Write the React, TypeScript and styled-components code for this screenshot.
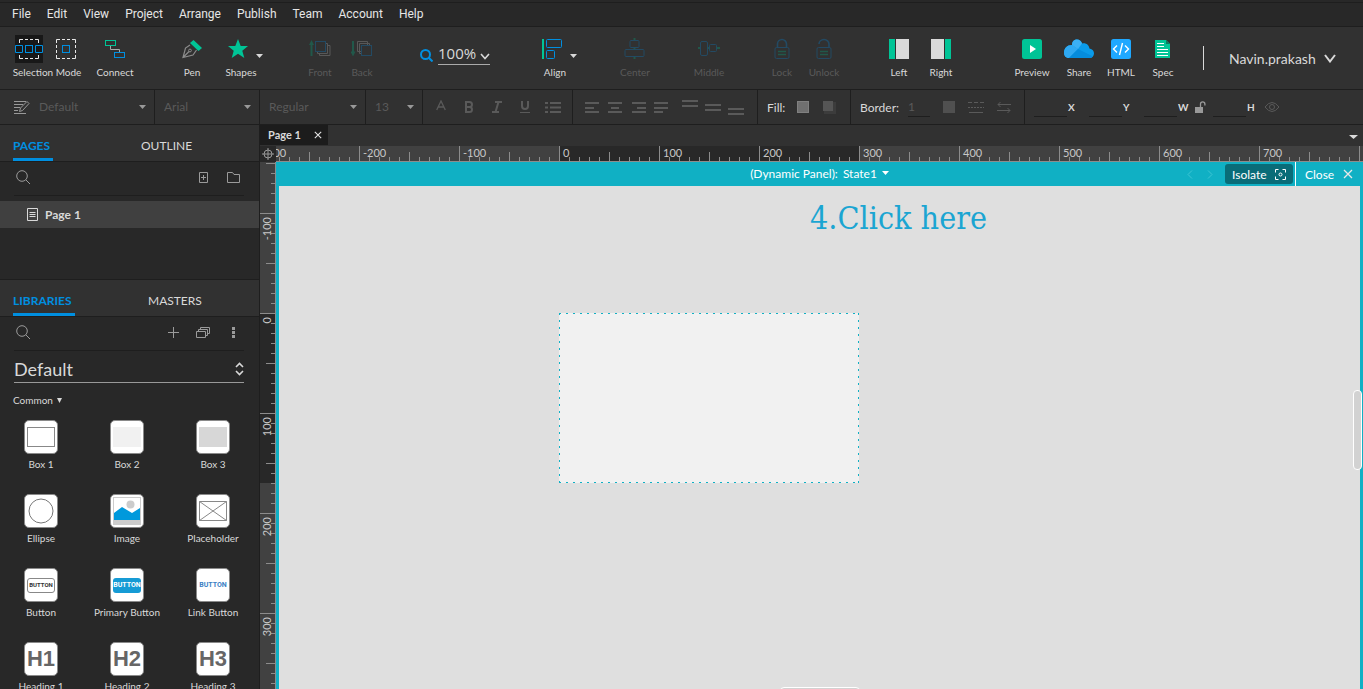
import React, { useEffect, useRef, useState } from "react";
import styled, { createGlobalStyle, css } from "styled-components";

const c = {
  bar: "#313131",
  dark: "#282828",
  line: "#1e1e1e",
  text: "#d9d9d9",
  dim: "#5a5a5a",
  icon: "#9b9b9b",
  blue: "#008fe0",
  green: "#00c496",
  dimBlue: "#234a63",
  dimGreen: "#21584a",
  teal: "#10b0c4",
  ruler: "#414141",
};

const GlobalStyle = createGlobalStyle`
  *, *::before, *::after { box-sizing: border-box; }
  body {
    margin: 0;
    background: ${c.dark};
    color: ${c.text};
    font-family: Lato, "Open Sans", sans-serif;
    font-size: 10px;
    overflow: hidden;
  }
  button, input, select { font: inherit; color: inherit; background: none; border: 0; padding: 0; margin: 0; }
  button { cursor: pointer; }
  svg { display: block; flex: none; }
`;

const Shell = styled.div`
  display: flex;
  flex-direction: column;
  height: 100vh;
`;

/* ---------- menu ---------- */
const MenuBar = styled.nav`
  display: flex;
  flex: none;
  align-items: center;
  gap: 16px;
  height: 27px;
  padding: 0 12px;
  border-bottom: 1px solid ${c.line};
  box-shadow: inset 0 2px 0 ${c.dark}, inset 0 3px 0 ${c.line};
  font-family: Roboto, sans-serif;
  font-size: 12px;
  color: #e6e6e6;
`;
const MenuButton = styled.button`
  line-height: 20px;
  padding-top: 2px;
`;

/* ---------- toolbar ---------- */
const Toolbar = styled.header`
  display: flex;
  flex: none;
  align-items: flex-start;
  height: 63px;
  padding: 8px 27px 0 12px;
  background: ${c.bar};
  border-bottom: 1px solid ${c.line};
`;
const Space = styled.div<{ $n: number }>`
  flex: ${(p) => p.$n} 1 0;
`;
const toolLayout = css<{ $w?: number }>`
  display: flex;
  flex: none;
  flex-direction: column;
  align-items: center;
  gap: 1px;
  width: ${(p) => p.$w ?? 42}px;
  line-height: 16px;
  white-space: nowrap;
`;
const ToolGroup = styled.div`
  ${toolLayout}
`;
const ToolButton = styled.button`
  ${toolLayout}
  &:disabled { color: ${c.dim}; cursor: default; }
`;
const IconSlot = styled.span<{ $caret?: boolean }>`
  display: flex;
  align-items: center;
  justify-content: center;
  gap: ${(p) => (p.$caret ? 8 : 0)}px;
  height: 28px;
  padding-left: ${(p) => (p.$caret ? 9 : 0)}px;
  & > svg + svg { margin-top: 13px; }
`;
const ModeRow = styled.div`
  display: flex;
  gap: 13px;
  height: 28px;
  padding-right: 4px;
`;
const ModeButton = styled.button<{ $on?: boolean }>`
  display: flex;
  align-items: center;
  background: ${(p) => (p.$on ? "#181818" : "none")};
`;
const Zoom = styled.div`
  display: flex;
  flex: none;
  align-items: center;
  gap: 5px;
  height: 28px;
  padding-top: 10px;
  margin-top: 1px;
`;
const ZoomValue = styled.button`
  display: flex;
  align-items: center;
  justify-content: space-between;
  width: 52px;
  height: 24px;
  margin-top: -4px;
  border-bottom: 1px solid #aaa;
  font-family: "Open Sans", sans-serif;
  font-size: 15px;
  line-height: 20px;
  & > svg { margin-top: 8px; }
`;
const Divider = styled.div`
  flex: none;
  width: 1px;
  height: 24px;
  margin-top: 11px;
  background: ${c.text};
`;
const Account = styled.button`
  display: flex;
  flex: none;
  align-items: center;
  justify-content: space-between;
  height: 24px;
  width: 107px;
  margin-top: 11px;
  font-size: 14px;
`;

/* ---------- format bar ---------- */
const FormatBar = styled.div`
  display: flex;
  flex: none;
  height: 35px;
  background: ${c.bar};
  border-bottom: 1px solid ${c.line};
`;
const Cell = styled.div<{ $w?: number; $pad?: number; $gap?: number }>`
  display: flex;
  flex: ${(p) => (p.$w ? "none" : "1")};
  align-items: center;
  gap: ${(p) => p.$gap ?? 0}px;
  width: ${(p) => (p.$w ? `${p.$w}px` : "auto")};
  padding: 0 8px 0 ${(p) => p.$pad ?? 9}px;
  border-right: ${(p) => (p.$w ? 1 : 0)}px solid ${c.line};
`;
const FormatSelect = styled.select`
  flex: 1;
  min-width: 0;
  height: 24px;
  margin-top: -2px;
  appearance: none;
  color: ${c.dim};
  font-size: 12px;
`;
const FormatButton = styled.button<{ $w: number; $lead?: boolean }>`
  display: flex;
  flex: none;
  align-items: center;
  justify-content: center;
  width: ${(p) => p.$w}px;
  height: 24px;
  margin-left: ${(p) => (p.$lead ? 5 : 0)}px;
`;
const FormatLabel = styled.label`
  font-size: 12px;
`;
const Field = styled.input`
  flex: none;
  height: 20px;
  border-bottom: 1px solid ${c.line};
  color: ${c.dim};
  font-size: 12px;
`;
const BorderField = styled(Field)`
  width: 22px;
`;
const CoordField = styled(Field)`
  width: 33px;
`;
const BorderGroup = styled.div`
  display: flex;
  flex: none;
  align-items: center;
  justify-content: space-between;
  width: 70px;
`;
const Coord = styled.label<{ $w: number }>`
  display: flex;
  flex: none;
  align-items: center;
  gap: 1px;
  width: ${(p) => p.$w}px;
  font-weight: 700;
`;
const RatioLock = styled.button`
  width: 18px;
`;

/* ---------- side bar ---------- */
const Main = styled.div`
  display: flex;
  flex: 1;
  min-height: 0;
`;
const Sidebar = styled.aside`
  display: flex;
  flex: none;
  flex-direction: column;
  width: 260px;
  overflow: hidden;
  border-right: 1px solid ${c.line};
`;
const PagesPane = styled.section`
  flex: none;
  height: 155px;
  border-bottom: 1px solid ${c.line};
`;
const LibraryPane = styled.section`
  flex: 1;
  min-height: 0;
  overflow: hidden;
`;
const Tabs = styled.div<{ $gap: number }>`
  display: flex;
  gap: ${(p) => p.$gap}px;
  height: 37px;
  padding-left: 13px;
  background: ${c.bar};
  border-bottom: 1px solid ${c.line};
`;
const Tab = styled.button<{ $on?: boolean; $w: number }>`
  width: ${(p) => p.$w}px;
  padding-top: 7px;
  text-align: left;
  white-space: nowrap;
  font-size: 12px;
  font-weight: ${(p) => (p.$on ? 700 : 400)};
  color: ${(p) => (p.$on ? c.blue : c.text)};
  border-bottom: 3px solid ${(p) => (p.$on ? c.blue : "transparent")};
`;
const SearchRow = styled.div`
  display: flex;
  align-items: center;
  height: 34px;
  margin: 0 15px 0 14px;
  padding: 0 4px 3px 2px;
  border-bottom: 1px solid ${c.line};
`;
const SearchInput = styled.input`
  flex: 1;
  min-width: 0;
`;
const RowIcon = styled.button`
  display: flex;
  align-items: center;
  justify-content: center;
  width: 30px;
  height: 24px;
  &:last-child { width: 14px; margin-left: 8px; }
`;
const PageRow = styled.button`
  display: flex;
  align-items: center;
  gap: 7px;
  width: 100%;
  height: 27px;
  margin-top: 5px;
  padding-left: 27px;
  background: #404040;
  font-size: 12px;
  font-weight: 700;
`;
const LibrarySelectRow = styled.div`
  display: flex;
  align-items: center;
  height: 32px;
  margin: 0 15px 0 14px;
  padding-top: 4px;
  border-bottom: 1px solid #999;
`;
const LibrarySelect = styled.select`
  flex: 1;
  appearance: none;
  font-size: 18px;
  line-height: 26px;
`;
const GroupToggle = styled.button`
  display: flex;
  align-items: center;
  gap: 4px;
  height: 16px;
  margin: 9px 0 12px 13px;
`;
const WidgetGrid = styled.div`
  display: grid;
  grid-template-columns: repeat(3, 82px);
  column-gap: 4px;
`;
const Widget = styled.button`
  display: flex;
  flex-direction: column;
  align-items: center;
  gap: 2px;
  height: 74px;
  white-space: nowrap;
  line-height: 16px;
`;
const Tile = styled.span`
  display: flex;
  align-items: center;
  justify-content: center;
  width: 34px;
  height: 34px;
  background: #fff;
  border: 1px solid #8a8a8a;
  border-radius: 5px;
`;
const TileHeading = styled.span`
  font: 700 22px/30px "Liberation Sans", sans-serif;
  color: #666;
`;
const TileButton = styled.span<{ $kind: "plain" | "primary" | "link" }>`
  display: flex;
  align-items: center;
  justify-content: center;
  width: 28px;
  height: 15px;
  border-radius: 3px;
  font: 700 7px/12px Roboto, sans-serif;
  ${(p) => p.$kind === "plain" && css`border: 1px solid #888; color: #333; font-size: 6px;`}
  ${(p) => p.$kind === "primary" && css`background: #169bd5; color: #fff;`}
  ${(p) => p.$kind === "link" && css`color: #3b7fc4;`}
`;

/* ---------- editor ---------- */
const Editor = styled.main`
  display: flex;
  flex: 1;
  flex-direction: column;
  min-width: 0;
  background: ${c.bar};
`;
const DocTabs = styled.div`
  display: flex;
  flex: none;
  align-items: flex-start;
  justify-content: space-between;
  height: 21px;
  padding-right: 5px;
`;
const DocTab = styled.div`
  display: flex;
  align-items: center;
  justify-content: space-between;
  width: 68px;
  height: 20px;
  padding: 0 6px 0 8px;
  background: #1c1c1c;
  font-size: 11px;
  font-weight: 700;
  line-height: 18px;
`;
const DocMenu = styled.button`
  padding-top: 10px;
`;
const Workspace = styled.div`
  display: grid;
  flex: 1;
  grid-template: 16px minmax(0, 1fr) / 16px minmax(0, 1fr);
  min-height: 0;
`;
const Corner = styled.div`
  display: flex;
  align-items: center;
  justify-content: center;
  background: ${c.dark};
`;
const RulerBox = styled.div`
  min-width: 0;
  min-height: 0;
  overflow: hidden;
  & text { font-size: 11px; fill: #c8c8c8; }
`;
const Stage = styled.div`
  display: flex;
  flex-direction: column;
  min-height: 0;
  overflow: hidden;
  background: ${c.teal};
`;
const StageHeader = styled.div`
  display: grid;
  flex: none;
  grid-template-columns: 1fr auto 1fr;
  align-items: center;
  height: 24px;
  color: #fff;
  font-size: 12px;
`;
const StateButton = styled.button`
  display: flex;
  grid-column: 2;
  align-items: center;
  gap: 5px;
  padding-bottom: 2px;
`;
const StageActions = styled.div`
  display: flex;
  align-items: center;
  justify-content: flex-end;
  height: 24px;
`;
const Step = styled.button`
  display: flex;
  justify-content: center;
  width: 20px;
`;
const Isolate = styled.button`
  display: flex;
  align-items: center;
  justify-content: space-between;
  width: 68px;
  height: 20px;
  margin: 0 2px 0 5px;
  padding: 0 7px;
  background: #096c78;
  border-radius: 3px;
`;
const CloseButton = styled.button`
  display: flex;
  align-items: center;
  justify-content: space-between;
  width: 68px;
  height: 24px;
  padding: 0 10px 0 9px;
  border-left: 1px solid #fff;
`;
const Canvas = styled.div`
  position: relative;
  flex: 1;
  min-height: 0;
  margin: 0 3px;
  background: #dfdfdf;
`;
const Annotation = styled.p`
  position: absolute;
  left: 531px;
  top: 10px;
  margin: 0;
  font: 32px/44px "DejaVu Serif Condensed", "Liberation Serif", serif;
  white-space: nowrap;
  color: #1ba5d2;
`;
const PanelShape = styled.div`
  position: absolute;
  left: 280px;
  top: 127px;
  background: #f1f1f1;
`;
const scrollHandle = css`
  position: absolute;
  background: #d2d2d2;
  border: 1px solid #fff;
  border-radius: 4px;
`;
const VScroll = styled.div`
  ${scrollHandle}
  top: 204px;
  right: -2px;
  width: 9px;
  height: 80px;
`;
const HScroll = styled.div`
  ${scrollHandle}
  left: 501px;
  bottom: -7px;
  width: 80px;
  height: 9px;
`;

/* ---------- icons ---------- */
const Caret = ({ w = 7, color = c.text }: { w?: number; color?: string }) => (
  <svg width={w} height={4} viewBox="0 0 8 4" preserveAspectRatio="none">
    <path d="M0 0h8L4 4z" fill={color} />
  </svg>
);
const Chevron = ({ w, h, s }: { w: number; h: number; s: number }) => (
  <svg width={w} height={h} viewBox={`0 0 ${w} ${h}`}>
    <path d={`M1 1L${w / 2} ${h - 1.5}L${w - 1} 1`} fill="none" stroke={c.text} strokeWidth={s} />
  </svg>
);
const SelectIcon = ({ wide }: { wide?: boolean }) => (
  <svg width={wide ? 28 : 20} height={28} viewBox={wide ? "0 0 28 28" : "4 0 20 28"} fill="none">
    <g stroke="#e8e8e8">
      <path d="M4.5 8V4.500H8M20 4.500h3.500V8M23.500 20v3.500H20M8 23.500H4.500V20M10 4.500h3M15 4.500h3M10 23.500h3M15 23.500h3" />
      {!wide && <path d="M4.500 10v3M4.500 15v3M23.500 10v3M23.500 15v3" />}
    </g>
    <g stroke={c.blue}>
      <rect x="10.500" y="10.500" width="7" height="7" />
      {wide && <path d="M.5 10.500h7v7h-7zM20.500 10.500h7v7h-7z" />}
    </g>
  </svg>
);
const ConnectIcon = () => (
  <svg width="22" height="20" viewBox="0 0 22 20" fill="none">
    <path d="M6.500 7v3.500h9V13" stroke="#aaa" />
    <rect x="1.500" y="1.500" width="10" height="5" stroke={c.green} />
    <rect x="10.500" y="13.500" width="10" height="5" stroke={c.blue} />
  </svg>
);
const PenIcon = () => (
  <svg width="20" height="20" viewBox="0 0 20 20">
    <path d="M11.500 1L20 9l-3.500 3L8 4z" fill={c.green} />
    <path d="M8 6L3.500 9 1 18.500 11 16l3.500-5M1 18.500L7 12.500" fill="none" stroke="#8c8c8c" strokeWidth="1.200" />
    <circle cx="8" cy="11.500" r="1.400" fill="none" stroke="#8c8c8c" />
  </svg>
);
const StarIcon = () => (
  <svg width="20" height="20" viewBox="0 0 20 20">
    <path d="M10 0l2.700 7H20l-5.700 4.800L16.300 19 10 14.800 3.700 19l2-7.200L0 7h7.300z" fill={c.green} />
  </svg>
);
const OrderIcon = ({ back }: { back?: boolean }) => (
  <svg width="22" height="20" viewBox="0 0 22 20" fill="none">
    {back ? (
      <>
        <path d="M2 2v12" stroke={c.dimGreen} strokeWidth="2" />
        <path d="M-.5 12.500h5L2 17.500z" fill={c.dimGreen} />
        <path d="M10 12.500H6.500v-10h10V6M10 14.500H8.500v-10h10V6" stroke="#585858" />
        <rect x="10.500" y="6.500" width="10" height="10" stroke={c.dimBlue} />
      </>
    ) : (
      <>
        <path d="M2.500 5v12" stroke={c.dimGreen} strokeWidth="2" />
        <path d="M0 6h5L2.500 1z" fill={c.dimGreen} />
        <path d="M17 4.500h1.500v10H8.500V12M19 6.500h2v10H10.500V15" stroke="#585858" />
        <rect x="6.500" y="2.500" width="10" height="10" stroke={c.dimBlue} />
      </>
    )}
  </svg>
);
const ZoomIcon = () => (
  <svg width="13" height="13" viewBox="0 0 13 13" fill="none" stroke={c.blue} strokeWidth="2">
    <circle cx="5.500" cy="5.500" r="4.500" />
    <path d="M8.500 8.500l4 4" />
  </svg>
);
const AlignIcon = () => (
  <svg width="20" height="22" viewBox="0 0 20 22" fill="none">
    <path d="M1 1v20" stroke={c.green} strokeWidth="2" />
    <rect x="4.500" y="1.500" width="15" height="8" rx="1" stroke={c.blue} />
    <rect x="4.500" y="12.500" width="8" height="8" rx="1" stroke={c.blue} />
  </svg>
);
const CenterIcon = () => (
  <svg width="22" height="22" viewBox="0 0 22 22" fill="none">
    <path d="M10.500 0v3M10.500 9v3M10.500 19v2" stroke={c.dimGreen} strokeWidth="2" />
    <rect x="6" y="2.500" width="9" height="7" rx="1" stroke={c.dimBlue} />
    <rect x="1" y="11.500" width="19" height="7" rx="1" stroke={c.dimBlue} />
  </svg>
);
const MiddleIcon = () => (
  <svg width="22" height="20" viewBox="0 0 22 20" fill="none">
    <path d="M0 9h3M9 9h3M19 9h3" stroke={c.dimGreen} strokeWidth="2" />
    <rect x="2.500" y="2.500" width="7" height="14" rx="1.500" stroke={c.dimBlue} />
    <rect x="11.500" y="5.500" width="7" height="7" rx="1" stroke={c.dimBlue} />
  </svg>
);
const LockIcon = ({ open }: { open?: boolean }) => (
  <svg width="16" height="22" viewBox="0 0 16 22" fill="none">
    <path d={open ? "M3 6a5 4.500 0 0 1 10 0v4" : "M3.500 10V6a4.500 4.500 0 0 1 9 0v4"} stroke={c.dimBlue} strokeWidth="1.600" />
    <rect x="1" y="9.500" width="14" height="11" rx="1.500" stroke={c.dimBlue} />
    <path d="M4 13.500h8M4 16.500h8" stroke={c.dimGreen} strokeWidth="1.500" />
  </svg>
);
const DockIcon = ({ right }: { right?: boolean }) => (
  <svg width="20" height="20" viewBox="0 0 20 20">
    <path d={right ? "M14 0h6v20h-6z" : "M0 0h6v20H0z"} fill={c.green} />
    <path d={right ? "M0 0h13v20H0z" : "M7 0h13v20H7z"} fill="#d9d9d9" />
  </svg>
);
const PreviewIcon = () => (
  <svg width="20" height="20" viewBox="0 0 20 20">
    <rect width="20" height="20" rx="2.500" fill={c.green} />
    <path d="M8 6l6 4-6 4z" fill="#fff" />
  </svg>
);
const CloudIcon = () => (
  <svg width="30" height="20" viewBox="0 0 30 20">
    <path d="M5 19C1.500 19 0 16.500 0 13.500 0 9.500 3 6 8 6 8 2 10.500.5 13 .5s4.500 2 5 4C22 3.500 25 6 25.500 9.500 28.500 10 30 12 30 14.500S28 19 25.500 19z" fill="#0a9bea" />
    <path d="M5 19C1.500 19 0 16.500 0 13.500 0 9.500 3 6 8 6l6 4-9 9z" fill="#2fa9f2" />
    <path d="M8 6C8 2 10.500.5 13 .5s4.500 2 5 4L14 10z" fill="#3bb0f5" />
    <path d="M5 19l9-9 15 7.500q-1.500 1.500-3.500 1.500z" fill="#058cdd" />
  </svg>
);
const HtmlIcon = () => (
  <svg width="20" height="20" viewBox="0 0 20 20">
    <rect width="20" height="20" rx="2.500" fill="#1fa8ff" />
    <path d="M6 6.500L2.500 10 6 13.500M14 6.500l3.500 3.500-3.500 3.500M11.500 4l-3 12" fill="none" stroke="#fff" strokeWidth="1.400" />
  </svg>
);
const SpecIcon = () => (
  <svg width="16" height="18" viewBox="0 0 16 18">
    <path d="M0 0h11l4 4v14H0z" fill={c.green} />
    <path d="M11 0l4 4h-4z" fill="#0a7a5f" />
    <path d="M2 3.500h7M2 6.500h7M2 9.500h11M2 12.500h11M2 15.500h11" stroke="#fff" />
  </svg>
);
const StyleIcon = () => (
  <svg width="16" height="14" viewBox="0 0 16 14" fill="none" stroke="#999">
    <path d="M0 1.500h12M0 4.500h9M0 7.500h6M0 10.500h4M0 13.500h12" />
    <path d="M5.500 11.500l1-3.500L13 1.500l2 2L8.500 10.500z" />
  </svg>
);
const ListIcon = () => (
  <svg width="16" height="12" viewBox="0 0 16 12" stroke={c.dim} strokeWidth="2">
    <path d="M0 2h3M5 2h11M0 6.500h3M5 6.500h11M0 11h3M5 11h11" />
  </svg>
);
const SearchIcon = () => (
  <svg width="15" height="15" viewBox="0 0 15 15" fill="none" stroke={c.icon}>
    <circle cx="6" cy="6" r="5.300" />
    <path d="M9.800 9.800L14 14" />
  </svg>
);
const SmallX = ({ s, w = 1.3 }: { s: number; w?: number }) => (
  <svg width={s} height={s} viewBox="0 0 10 10"><path d="M1 1l8 8M9 1L1 9" stroke="#e8e8e8" strokeWidth={w} /></svg>
);

/* ---------- rulers ---------- */
function Ruler({ vertical, origin, length }: { vertical?: boolean; origin: number; length: number }) {
  const box = useRef<HTMLDivElement>(null);
  const [size, setSize] = useState(0);

  useEffect(() => {
    const el = box.current;
    if (!el) return;
    const measure = () => setSize(vertical ? el.clientHeight : el.clientWidth);
    measure();
    const observer = new ResizeObserver(measure);
    observer.observe(el);
    return () => observer.disconnect();
  }, [vertical]);

  const ticks: number[] = [];
  for (let v = -300; origin + v < size; v += 10) ticks.push(v);
  const firstLabel = vertical ? 0 : -20;
  const labels = ticks.filter((v) => v % 100 === 0 && origin + v >= firstLabel && origin + v < size - 12);
  const tickPath = ticks
    .map((v) => {
      const p = origin + v + 0.5;
      const len = v % 100 === 0 ? 15 : v % 50 === 0 ? 9 : 4;
      return vertical ? `M${15 - len} ${p}h${len}` : `M${p} ${15 - len}v${len}`;
    })
    .join("");

  return (
    <RulerBox ref={box}>
      <svg width={vertical ? 16 : "100%"} height={vertical ? "100%" : 16}>
        <rect width="100%" height="100%" fill={c.ruler} />
        {vertical ? (
          <rect y={origin} width="16" height={length} fill={c.dark} />
        ) : (
          <rect x={origin} width={length} height="16" fill={c.dark} />
        )}
        <path d={tickPath} stroke="#8c8c8c" />
        <rect x={vertical ? 15 : 0} y={vertical ? 0 : 15} width={vertical ? 1 : "100%"} height={vertical ? "100%" : 1} fill="#8c8c8c" />
        {labels.map((v) =>
          vertical ? (
            <text key={v} textAnchor="end" transform={`translate(11 ${origin + v + 4}) rotate(-90)`}>{v}</text>
          ) : (
            <text key={v} x={origin + v + 4} y={11}>{v}</text>
          )
        )}
      </svg>
    </RulerBox>
  );
}

/* ---------- data ---------- */
const menus = ["File", "Edit", "View", "Project", "Arrange", "Publish", "Team", "Account", "Help"];

const widgets: [string, React.ReactNode][] = [
  ["Box 1", <svg width="28" height="20"><rect x=".5" y=".5" width="27" height="19" fill="#fff" stroke="#888" /></svg>],
  ["Box 2", <svg width="28" height="20"><rect width="28" height="20" fill="#f1f1f1" /></svg>],
  ["Box 3", <svg width="28" height="20"><rect width="28" height="20" fill="#d7d7d7" /></svg>],
  ["Ellipse", <svg width="26" height="26"><circle cx="13" cy="13" r="12" fill="#fff" stroke="#777" /></svg>],
  ["Image", (
    <svg width="28" height="28" viewBox="0 0 28 28">
      <rect x=".5" y=".5" width="27" height="27" fill="#fff" stroke="#ccc" />
      <circle cx="17.500" cy="7.500" r="4" fill="#ccc" />
      <path d="M1 16l8-6 10 6 8-5v12H1z" fill="#0099dc" />
      <path d="M0 23h28v5H0z" fill="#ccc" />
    </svg>
  )],
  ["Placeholder", <svg width="28" height="20"><path d="M.5.5h27v19H.5zM.5.500l27 19M27.500.500l-27 19" fill="#fff" stroke="#888" /></svg>],
  ["Button", <TileButton $kind="plain">BUTTON</TileButton>],
  ["Primary Button", <TileButton $kind="primary">BUTTON</TileButton>],
  ["Link Button", <TileButton $kind="link">BUTTON</TileButton>],
  ["Heading 1", <TileHeading>H1</TileHeading>],
  ["Heading 2", <TileHeading>H2</TileHeading>],
  ["Heading 3", <TileHeading>H3</TileHeading>],
];

const aligns: [string, string][] = [
  ["Align left", "M0 2h14M0 7h9M0 11h14"],
  ["Align center", "M0 2h14M3 7h8M0 11h14"],
  ["Align right", "M1 2h14M6 7h9M1 11h14"],
  ["Justify", "M0 2h14M0 7h14M0 11h9"],
  ["Align top", "M0 0h16M0 5h16"],
  ["Align middle", "M0 4h16M0 9h16"],
  ["Align bottom", "M0 8h16M0 13h16"],
];

const selects = [
  { label: "Style", value: "Default", w: 155 },
  { label: "Font", value: "Arial", w: 105 },
  { label: "Weight", value: "Regular", w: 106 },
  { label: "Size", value: "13", w: 57 },
];

const Tool = ({ label, icon, w, disabled, caret }: { label: string; icon: React.ReactNode; w?: number; disabled?: boolean; caret?: boolean }) => (
  <ToolButton $w={w} disabled={disabled}>
    <IconSlot $caret={caret}>
      {icon}
      {caret && <Caret />}
    </IconSlot>
    {label}
  </ToolButton>
);

export default function App() {
  return (
    <Shell>
      <GlobalStyle />
      <MenuBar>
        {menus.map((m) => <MenuButton key={m}>{m}</MenuButton>)}
      </MenuBar>

      <Toolbar>
        <ToolGroup $w={70}>
          <ModeRow>
            <ModeButton $on aria-label="Select intersected"><SelectIcon wide /></ModeButton>
            <ModeButton aria-label="Select contained"><SelectIcon /></ModeButton>
          </ModeRow>
          Selection Mode
        </ToolGroup>
        <Tool label="Connect" w={66} icon={<ConnectIcon />} />
        <Space $n={23} />
        <Tool label="Pen" icon={<PenIcon />} />
        <Tool label="Shapes" w={56} icon={<StarIcon />} caret />
        <Space $n={30} />
        <Tool label="Front" disabled icon={<OrderIcon />} />
        <Tool label="Back" disabled icon={<OrderIcon back />} />
        <Space $n={37} />
        <Zoom>
          <ZoomIcon />
          <ZoomValue>100% <Chevron w={10} h={7} s={1.6} /></ZoomValue>
        </Zoom>
        <Space $n={44} />
        <Tool label="Align" icon={<AlignIcon />} caret />
        <Space $n={22} />
        <Tool label="Center" w={74} disabled icon={<CenterIcon />} />
        <Tool label="Middle" w={74} disabled icon={<MiddleIcon />} />
        <Space $n={15} />
        <Tool label="Lock" disabled icon={<LockIcon />} />
        <Tool label="Unlock" disabled icon={<LockIcon open />} />
        <Space $n={33} />
        <Tool label="Left" icon={<DockIcon />} />
        <Tool label="Right" icon={<DockIcon right />} />
        <Space $n={44} />
        <Tool label="Preview" w={52} icon={<PreviewIcon />} />
        <Tool label="Share" icon={<CloudIcon />} />
        <Tool label="HTML" icon={<HtmlIcon />} />
        <Tool label="Spec" icon={<SpecIcon />} />
        <Space $n={19} />
        <Divider />
        <Space $n={25} />
        <Account>Navin.prakash <Chevron w={12} h={9} s={2} /></Account>
      </Toolbar>

      <FormatBar>
        {selects.map((s, i) => (
          <Cell key={s.label} $w={s.w} $pad={i === 0 ? 14 : 9} $gap={i === 0 ? 9 : 0}>
            {i === 0 && <StyleIcon />}
            <FormatSelect aria-label={s.label}><option>{s.value}</option></FormatSelect>
            <Caret color="#999" />
          </Cell>
        ))}
        <Cell $w={150} $pad={4}>
          <FormatButton $w={28} aria-label="Text color">
            <svg width="10" height="14" viewBox="0 0 10 14" fill="none" stroke={c.dim} strokeWidth="1.300"><path d="M.7 10L5 1l4.300 9M2.300 7h5.400" /></svg>
          </FormatButton>
          <FormatButton $w={28} aria-label="Bold">
            <svg width="10" height="12" viewBox="0 0 10 12" fill="none" stroke={c.dim} strokeWidth="2"><path d="M1 1h4.500a2.400 2.400 0 0 1 0 5H1M5.500 6a2.500 2.500 0 0 1 0 5H1M2 1v10" /></svg>
          </FormatButton>
          <FormatButton $w={28} aria-label="Italic">
            <svg width="10" height="12" viewBox="0 0 10 12" fill="none" stroke={c.dim} strokeWidth="2"><path d="M3 1h7M0 11h7M6.500 1l-3 10" /></svg>
          </FormatButton>
          <FormatButton $w={28} aria-label="Underline">
            <svg width="10" height="12" viewBox="0 0 10 12" fill="none" stroke={c.dim} strokeWidth="2"><path d="M2 0v5a3 3 0 0 0 6 0V0" /><path d="M0 11.500h10" strokeWidth="1" /></svg>
          </FormatButton>
          <FormatButton $w={28} aria-label="Bullets"><ListIcon /></FormatButton>
        </Cell>
        <Cell $w={185} $pad={8}>
          {aligns.map(([label, d], i) => (
            <FormatButton key={label} $w={23} $lead={i === 4} aria-label={label}>
              <svg width={16} height={15} viewBox="0 -1 16 15" stroke={c.dim} strokeWidth="2" fill="none"><path d={d} /></svg>
            </FormatButton>
          ))}
        </Cell>
        <Cell $w={93} $gap={12}>
          <FormatLabel as="span">Fill:</FormatLabel>
          <FormatButton $w={12} aria-label="Fill color">
            <svg width="12" height="12"><rect x=".5" y=".5" width="11" height="11" fill="#707070" stroke="#808080" /></svg>
          </FormatButton>
          <FormatButton $w={16} aria-label="Shadow">
            <svg width="14" height="14"><path d="M2 2h12v12H2z" fill="#3c3c3c" /><path d="M1 1h10v10H1z" fill="#555" /></svg>
          </FormatButton>
        </Cell>
        <Cell $w={174} $gap={13}>
          <BorderGroup>
            <FormatLabel htmlFor="border">Border:</FormatLabel>
            <BorderField id="border" defaultValue="1" />
          </BorderGroup>
          <FormatButton $w={12} aria-label="Border color"><svg width="12" height="12"><rect width="12" height="12" fill="#505050" /></svg></FormatButton>
          <FormatButton $w={16} aria-label="Border style">
            <svg width="16" height="12" stroke={c.dim}><path d="M0 1.500h16" strokeDasharray="4 2" /><path d="M0 6.500h16" strokeDasharray="2 1" /><path d="M1 11.500h14" /></svg>
          </FormatButton>
          <FormatButton $w={14} aria-label="Arrow style">
            <svg width="14" height="12" fill="none" stroke={c.dim}><path d="M14 3.500H1M3.500 1L1 3.500 3.500 6M0 9.500h13M10.500 7l2.500 2.500-2.500 2.500" /></svg>
          </FormatButton>
        </Cell>
        <Cell $pad={9}>
          <Coord $w={55}><CoordField />X</Coord>
          <Coord $w={55}><CoordField />Y</Coord>
          <Coord $w={51}><CoordField />W</Coord>
          <RatioLock aria-label="Lock aspect ratio">
            <svg width="11" height="12" viewBox="0 0 11 12"><path d="M0 6h8v6H0z" fill="#999" /><path d="M5.500 6V3a2.200 2.200 0 0 1 4.400 0v1.500" fill="none" stroke="#999" strokeWidth="1.300" /></svg>
          </RatioLock>
          <Coord $w={51}><CoordField />H</Coord>
          <svg width="16" height="12" viewBox="0 0 16 12" fill="none" stroke={c.dim}><path d="M1 6q7-9 14 0q-7 9-14 0z" /><circle cx="8" cy="6" r="2.500" /></svg>
        </Cell>
      </FormatBar>

      <Main>
        <Sidebar>
          <PagesPane>
            <Tabs $gap={88}>
              <Tab $on $w={40}>PAGES</Tab>
              <Tab $w={62}>OUTLINE</Tab>
            </Tabs>
            <SearchRow>
              <SearchIcon />
              <SearchInput aria-label="Search pages" />
              <RowIcon aria-label="Add page">
                <svg width="9" height="11" fill="none" stroke={c.icon}><path d="M.5.5h8v10h-8zM4.500 3v5M2 5.500h5" /></svg>
              </RowIcon>
              <RowIcon aria-label="Add folder">
                <svg width="13" height="11" fill="none" stroke={c.icon}><path d="M.5.500h5l1.500 2h5.500v8H.5z" /></svg>
              </RowIcon>
            </SearchRow>
            <PageRow>
              <svg width="11" height="13" fill="none" stroke={c.text}><path d="M.5.5h10v12H.500zM2.500 4.500h6M2.500 6.500h6M2.500 8.500h6" /></svg>
              Page 1
            </PageRow>
          </PagesPane>
          <LibraryPane>
            <Tabs $gap={73}>
              <Tab $on $w={62}>LIBRARIES</Tab>
              <Tab $w={62}>MASTERS</Tab>
            </Tabs>
            <SearchRow>
              <SearchIcon />
              <SearchInput aria-label="Search libraries" />
              <RowIcon aria-label="Add library">
                <svg width="11" height="11" stroke={c.icon}><path d="M5.500 0v11M0 5.500h11" /></svg>
              </RowIcon>
              <RowIcon aria-label="Library windows">
                <svg width="14" height="11" fill="none" stroke={c.icon}><path d="M.5 4.500h9v6h-9zM2.500 4V2.500h9v6H10M4.500 2V.5h9v6H12" /></svg>
              </RowIcon>
              <RowIcon aria-label="More">
                <svg width="3" height="11" fill={c.icon}><path d="M0 0h3v3H0zM0 4h3v3H0zM0 8h3v3H0z" /></svg>
              </RowIcon>
            </SearchRow>
            <LibrarySelectRow>
              <LibrarySelect aria-label="Library"><option>Default</option></LibrarySelect>
              <svg width="9" height="14" viewBox="0 0 9 14" fill="none" stroke={c.text} strokeWidth="1.600"><path d="M1 5l3.500-3.500L8 5M1 9l3.500 3.500L8 9" /></svg>
            </LibrarySelectRow>
            <GroupToggle>
              Common
              <svg width="5" height="5"><path d="M0 0h5L2.500 5z" fill={c.text} /></svg>
            </GroupToggle>
            <WidgetGrid>
              {widgets.map(([name, art]) => (
                <Widget key={name}><Tile>{art}</Tile>{name}</Widget>
              ))}
            </WidgetGrid>
          </LibraryPane>
        </Sidebar>

        <Editor>
          <DocTabs>
            <DocTab>Page 1 <button aria-label="Close tab"><SmallX s={8} /></button></DocTab>
            <DocMenu aria-label="Open tabs"><Caret w={9} /></DocMenu>
          </DocTabs>
          <Workspace>
            <Corner>
              <svg width="12" height="12" fill="none" stroke="#999"><circle cx="6" cy="6" r="4" /><path d="M6 0v12M0 6h12" /></svg>
            </Corner>
            <Ruler origin={283} length={300} />
            <Ruler vertical origin={151} length={170} />
            <Stage>
              <StageHeader>
                <StateButton><span>(Dynamic Panel):</span><span>State1</span><Caret color="#fff" /></StateButton>
                <StageActions>
                  <Step aria-label="Previous state"><svg width="6" height="9" fill="none" stroke="#3fc4d3"><path d="M5 .5l-4 4 4 4" /></svg></Step>
                  <Step aria-label="Next state"><svg width="6" height="9" fill="none" stroke="#3fc4d3"><path d="M1 .5l4 4-4 4" /></svg></Step>
                  <Isolate>
                    Isolate
                    <svg width="11" height="11" fill="none" stroke="#fff"><path d="M.5 3.500v-3h3M7.500.5h3v3M10.500 7.500v3h-3M3.500 10.500h-3v-3" /><circle cx="5.500" cy="5.500" r="1.500" /></svg>
                  </Isolate>
                  <CloseButton>Close <SmallX s={10} /></CloseButton>
                </StageActions>
              </StageHeader>
              <Canvas>
                <Annotation>4.Click here</Annotation>
                <PanelShape>
                  <svg width="300" height="170" fill="none" stroke={c.teal}>
                    <path d="M0 .5h300M299.500 0v170M0 169.500h300M.5 0v170" strokeDasharray="2 5" />
                  </svg>
                </PanelShape>
                <VScroll />
                <HScroll />
              </Canvas>
            </Stage>
          </Workspace>
        </Editor>
      </Main>
    </Shell>
  );
}
